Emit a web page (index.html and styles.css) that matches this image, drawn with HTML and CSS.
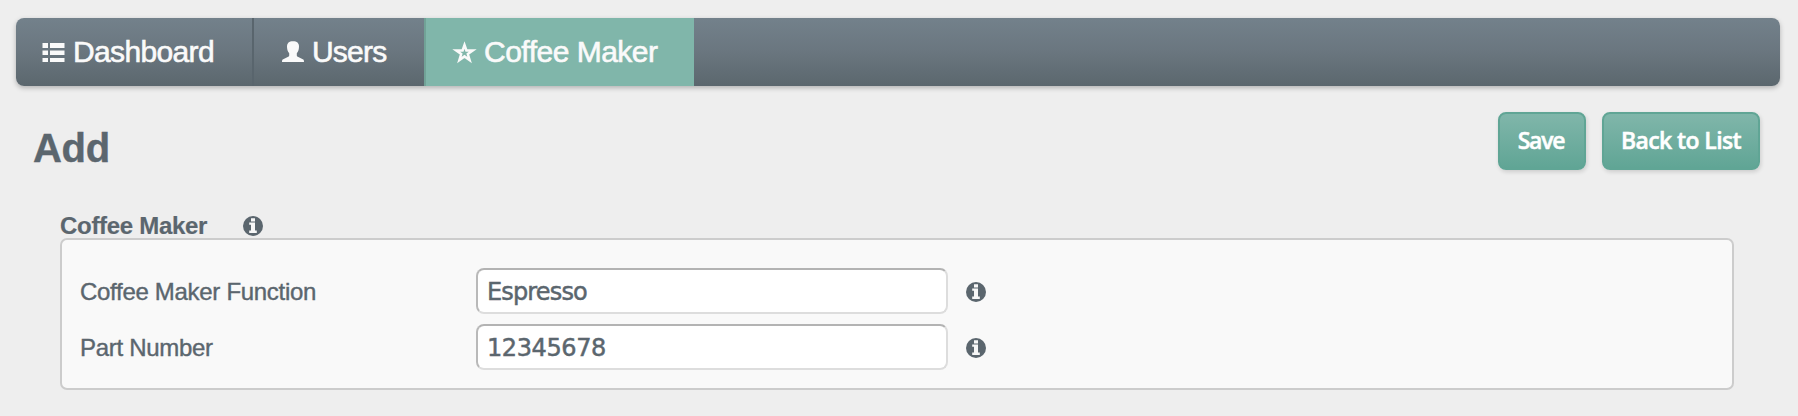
FILE: index.html
```html
<!DOCTYPE html>
<html lang="en">
<head>
<meta charset="utf-8">
<title>Coffee Maker</title>
<link rel="stylesheet" href="styles.css">
</head>
<body>
<svg class="defs" width="0" height="0">
  <symbol id="info" viewBox="0 0 20 20">
    <circle cx="10" cy="10" r="10" fill="#5b666e"/>
    <path fill="#f7f7f7" d="M8 2.200h4v3.200H8zM6.200 6.400H12v8.200h1.800v2.400H6.200v-2.400H8V8.700H6.200z"/>
  </symbol>
</svg>
<nav class="nav">
  <a class="tab tab-dashboard">
    <svg class="icon" viewBox="0 0 22 20"><path d="M.5 1H6v5H.5zM8 1h14.500v5H8zM.5 8.500H6V13H.5zM8 8.500h14.500V13H8zM.5 16H6v4H.5zM8 16h14.500v4H8z"/></svg>
    <span class="tab-text">Dashboard</span>
  </a>
  <a class="tab tab-users">
    <svg class="icon" viewBox="0 0 22 20"><path d="M11-.8c4 0 6 1.900 6 5.300 0 2.500-.6 5-2.200 6.700v2c0 .8.300 1.200 1 1.500l5 2.600c.8.400 1.200 1 1.200 2.600H0c0-1.600.400-2.200 1.200-2.600l5-2.600c.7-.3 1-.7 1-1.500v-2C5.600 9.500 5 7 5 4.500 5 1.100 7-.8 11-.8z"/></svg>
    <span class="tab-text">Users</span>
  </a>
  <a class="tab tab-active">
    <svg class="icon" viewBox="0 0 22 20"><path class="star" d="M10.500 3l1.900 5.500h6.400l-5 3.600 1.800 5.900-5.100-3.600L5.400 18l1.800-5.900-5-3.600h6.400z"/></svg>
    <span class="tab-text">Coffee Maker</span>
  </a>
</nav>
<header class="head">
  <h1 class="title">Add</h1>
  <div class="actions">
    <button class="btn btn-save">Save</button>
    <button class="btn btn-back">Back to List</button>
  </div>
</header>
<main class="section">
  <div class="legend"><span class="legend-text">Coffee Maker</span><svg class="info"><use href="#info"/></svg></div>
  <div class="panel">
    <div class="row">
      <label class="label" for="function">Coffee Maker Function</label>
      <input class="input" id="function" type="text" value="Espresso">
      <svg class="info"><use href="#info"/></svg>
    </div>
    <div class="row">
      <label class="label" for="part">Part Number</label>
      <input class="input input-number" id="part" type="text" value="12345678">
      <svg class="info"><use href="#info"/></svg>
    </div>
  </div>
</main>
</body>
</html>
```
FILE: styles.css
```css
* { box-sizing: border-box; }
body {
  margin: 0;
  padding: 18px 18px 0 16px;
  height: 416px;
  overflow: hidden;
  background: #eee;
  color: #5b666e;
  font-family: "Liberation Sans", Arial, sans-serif;
}
.defs { display: block; }
.nav {
  display: flex;
  height: 68px;
  border-radius: 8px;
  background: linear-gradient(#73818b, #6a767f 50%, #5b676e);
  box-shadow: 0 2px 5px rgba(0, 0, 0, .25);
}
.tab {
  display: flex;
  align-items: center;
  color: #fafafa;
  font-size: 30px;
  letter-spacing: -.5px;
  white-space: nowrap;
  -webkit-text-stroke: .6px #fafafa;
}
.tab-dashboard { width: 238px; padding-left: 26px; border-right: 2px solid #59656d; letter-spacing: -.65px; }
.tab-dashboard .icon { margin-right: 9px; }
.tab-users { width: 170px; padding-left: 28px; letter-spacing: -.8px; }
.tab-active { width: 270px; padding-left: 28px; background: #80b6aa; border-left: 2px solid #71a297; }
.icon { width: 22px; height: 20px; margin-right: 8px; overflow: visible; fill: #fafafa; stroke: none; }
.star { fill: none; stroke: #fafafa; stroke-width: 2.5; }
.head { display: flex; justify-content: space-between; height: 126px; padding: 26px 20px 0 17px; }
.title { margin: 13px 0 0; font-size: 40px; line-height: 46px; letter-spacing: -.3px; -webkit-text-stroke: .4px #5b666e; }
.actions { display: flex; align-items: flex-start; gap: 16px; }
.btn {
  height: 58px;
  padding: 0 0 3px;
  border: 2px solid #60a595;
  border-radius: 8px;
  background: linear-gradient(#80b6aa, #60a595);
  box-shadow: 1px 2px 4px rgba(0, 0, 0, .14);
  color: #fff;
  font: 600 23px "Open Sans", sans-serif;
  white-space: nowrap;
  -webkit-text-stroke: .5px #fff;
}
.btn-save { width: 88px; padding-right: 2px; letter-spacing: -1.2px; }
.btn-back { width: 158px; letter-spacing: -.6px; }
.section { width: 1674px; margin-left: 44px; }
.legend { display: flex; align-items: center; height: 26px; padding-top: 1px; font-size: 24px; font-weight: bold; }
.legend-text { width: 183px; letter-spacing: -.3px; -webkit-text-stroke: .2px #5b666e; }
.info { width: 20px; height: 20px; }
.panel {
  display: flex;
  flex-direction: column;
  gap: 10px;
  height: 152px;
  padding: 28px 18px;
  border: 2px solid #ccc;
  border-radius: 7px;
  background: #f9f9f9;
}
.row { display: flex; align-items: center; height: 46px; }
.row .info { margin-top: 1px; }
.label { width: 396px; padding-top: 2px; font-size: 24px; letter-spacing: -.3px; -webkit-text-stroke: .4px #5b666e; }
.input {
  width: 472px;
  height: 46px;
  margin-right: 18px;
  padding: 2px 9px 0;
  border: 2px solid;
  border-color: #b3b3b3 #ddd #ddd #b9b9b9;
  border-radius: 8px;
  background: #fff;
  color: #5b666e;
  font: 24px "DejaVu Sans", sans-serif;
  letter-spacing: -.85px;
  -webkit-text-stroke: .5px #5b666e;
}
.input-number { letter-spacing: -.4px; }
```
